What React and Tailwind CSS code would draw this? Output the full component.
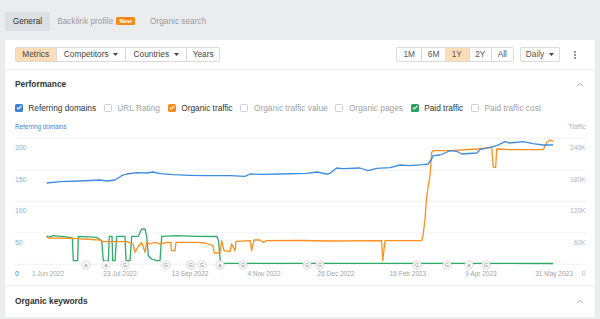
import React from "react";

const BLUE =
  "46.7,184 60,182.7 80,182 100,181 106.7,182 115,181 121.7,176.7 126.7,175 136.7,173.7 146.7,174 153,173 160,174.7 173,175.7 190,176.3 206.7,176.7 230,176.7 245,177.3 250,175 263,175.3 280,175 306.7,174.3 316.7,173 326.7,175 330,174.3 336.7,169 343,169.7 360,169 368,171.7 376.7,169.3 390,168.7 400,166 410,166.7 423,165.7 428,165 431.7,160 433,156.7 440,156 445,154 450,151.7 456.7,152.3 461.7,155 476.7,154 480,150.7 490,148.3 496.7,146.7 505,142.7 510,144 523,142.7 533,144.7 543,146 553,146";
const ORANGE =
  "46.7,238.3 50,239 73,239.3 100,241 103,242.7 126.7,242.7 133,245 135,253.3 138,248 141.7,243.3 145,253.3 146.7,243.3 150,245 155,243.3 160,245 166.7,243.3 170.7,243.3 171.5,251.7 175,251.7 176,243.3 196.7,243.3 205,244 213,246.7 214.3,254 220,254 221.7,241.7 224,251.7 230,252.7 231.7,245 235,251.7 236,242.3 250,241.7 251.7,251.7 254,241 260,241 263,243.3 266.7,241.7 300,241.5 330,242 381.7,241.7 382.7,261.7 385,241.7 421.7,241.7 423,237 425,220 426.7,198 428.5,185 430,176.7 431.7,153.3 433.3,151.7 450,151.7 476.7,150 491.7,148.3 493.3,168.3 495.7,168.3 496.7,150 510,150.7 543.3,150.7 546.7,143.3 550,141 553.3,142.3";
const GREEN =
  "46.7,236.7 48.3,238.3 53.3,236.7 70,238.3 72.3,239 73.3,261.7 77.7,261.7 78.3,237.3 96.7,238.3 101.7,241.7 103.3,261.7 108.3,261.7 109.3,237.3 112,237.3 112.7,261.7 115,261.7 116.7,237.3 125,237.3 126,261.7 130,261.7 131.7,237.3 138.3,237.3 141.7,230 145,230 146.7,237.3 148.3,256.7 151.7,260 156.7,261.7 160,261.7 161.7,237.3 176.7,236.7 196.7,237.3 217,237.5 218.5,241.7 220.5,264.3 553,264.5";

const MARKS = [
  [86, "a"], [106, "a"], [125, "G"], [166, "G"], [191, "G"], [202, "G"], [220, "a"],
  [243, "G"], [307, "G"], [320, "G"], [417, "G"], [447, "G"], [469, "a"], [486, "G"],
];
const DATES = [
  [48, "1 Jun 2022"], [120, "23 Jul 2022"], [190, "13 Sep 2022"], [264, "4 Nov 2022"],
  [336, "26 Dec 2022"], [408, "16 Feb 2023"], [481, "9 Apr 2023"], [554, "31 May 2023"],
];
const GRID = [139.3, 171, 202.3, 233.8, 265.3];
const LEFT = ["200", "150", "100", "50", "0"];
const RIGHT = ["240K", "180K", "120K", "60K", "0"];

function Caret() {
  return (
    <svg width="5" height="3" viewBox="0 0 5 3" className="ml-[4.5px]">
      <path d="M0 0 L5 0 L2.5 3 Z" fill="#444" />
    </svg>
  );
}

function Chevron() {
  return (
    <svg width="8" height="5" viewBox="0 0 8 5">
      <polyline points="1,4.2 4,1.2 7,4.2" fill="none" stroke="#aaa" strokeWidth="1" />
    </svg>
  );
}

function Cb({ cls, checked }) {
  if (!checked)
    return <span className="w-[8px] h-[8px] rounded-[1.5px] border border-[#cfcfcf] bg-white shrink-0" />;
  return (
    <span className={"w-[8px] h-[8px] rounded-[1.5px] shrink-0 flex items-center justify-center " + cls}>
      <svg width="6" height="5" viewBox="0 0 6 5">
        <polyline points="0.8,2.6 2.3,4 5.2,1" fill="none" stroke="#fff" strokeWidth="1.1" />
      </svg>
    </span>
  );
}

function Item({ cls, checked, label }) {
  return (
    <div className="flex items-center gap-[5.6px]">
      <Cb cls={cls} checked={checked} />
      <span className={checked ? "text-[#333]" : "text-[#a2a2a2]"}>{label}</span>
    </div>
  );
}

export default function App() {
  return (
    <div
      className="w-[600px] h-[319px] overflow-hidden bg-[#ebecee] text-[8.3px] leading-none"
      style={{ fontFamily: '"Liberation Sans", Arial, sans-serif' }}
    >
      {/* tabs */}
      <div className="flex items-center h-[19px] mt-[12px] ml-[5px]">
        <div className="h-full px-[7.7px] flex items-center bg-[#dcdfe3] rounded-[2px] text-[#333]">General</div>
        <div className="ml-[7.3px] flex items-center text-[#9b9b9b]">
          Backlink profile
          <span className="ml-[3.3px] w-[18.7px] h-[8px] rounded-[1.5px] bg-[#fb8a12] text-white text-[6px] font-bold flex items-center justify-center">
            New
          </span>
        </div>
        <div className="ml-[15px] text-[#9b9b9b]">Organic search</div>
      </div>

      {/* panel */}
      <div className="mt-[9px] mx-[5px] bg-white">
        {/* toolbar */}
        <div className="h-[30px] flex items-center pl-[9.7px] pr-[19px] border-b border-[#f0f0f0]">
          <div className="flex h-[15.5px] border border-[#dadada] rounded-[2px] text-[#444]">
            <div className="w-[40px] flex items-center justify-center bg-[#fddcb8]">Metrics</div>
            <div className="w-[69.6px] flex items-center justify-center border-l border-[#dadada]">
              Competitors
              <Caret />
            </div>
            <div className="w-[60.7px] flex items-center justify-center border-l border-[#dadada]">
              Countries
              <Caret />
            </div>
            <div className="w-[33.3px] flex items-center justify-center border-l border-[#dadada]">Years</div>
          </div>
          <div className="ml-auto flex h-[15.5px] border border-[#dadada] rounded-[2px] text-[#555]">
            <div className="w-[23.7px] flex items-center justify-center">1M</div>
            <div className="w-[24px] flex items-center justify-center border-l border-[#dadada]">6M</div>
            <div className="w-[23.6px] flex items-center justify-center bg-[#fddcb8]">1Y</div>
            <div className="w-[22.4px] flex items-center justify-center border-l border-[#dadada]">2Y</div>
            <div className="w-[21.6px] flex items-center justify-center border-l border-[#dadada]">All</div>
          </div>
          <div className="ml-[6px] w-[40.4px] h-[15.5px] border border-[#dadada] rounded-[2px] flex items-center justify-center text-[#555]">
            Daily
            <Caret />
          </div>
          <div className="ml-[14px] flex flex-col gap-[1px]">
            <span className="w-[2px] h-[2px] rounded-full bg-[#777]" />
            <span className="w-[2px] h-[2px] rounded-full bg-[#777]" />
            <span className="w-[2px] h-[2px] rounded-full bg-[#777]" />
          </div>
        </div>

        {/* performance header */}
        <div className="h-[28px] flex items-center justify-between pl-[10px] pr-[11px]">
          <span className="text-[8.4px] font-bold text-[#333]">Performance</span>
          <Chevron />
        </div>

        {/* legend */}
        <div className="h-[20px] flex items-center gap-[7.7px] pl-[9.7px] text-[8.3px]">
          <Item cls="bg-[#3a84d6]" checked label="Referring domains" />
          <Item label="URL Rating" />
          <Item cls="bg-[#f98b1e]" checked label="Organic traffic" />
          <Item label="Organic traffic value" />
          <Item label="Organic pages" />
          <Item cls="bg-[#23a35e]" checked label="Paid traffic" />
          <Item label="Paid traffic cost" />
        </div>

        {/* axis titles */}
        <div className="h-[18px] flex items-center justify-between pl-[10px] pr-[9.3px] text-[6.3px]">
          <span className="text-[#3d86d6]">Referring domains</span>
          <span className="text-[#b0b0b0]">Traffic</span>
        </div>

        {/* chart */}
        <svg width="590" height="149" viewBox="5 137 590 149" className="block">
          {GRID.map((y) => (
            <line key={y} x1="15" x2="586" y1={y} y2={y} stroke="#f0f0f0" strokeWidth="0.8" />
          ))}
          {LEFT.map((t, i) => (
            <text
              key={t}
              x="15"
              y={GRID[i] + 12}
              fontSize="6.8"
              fill={t === "0" ? "#3a7fd4" : "#7fb0e6"}
              fontFamily="Liberation Sans, Arial, sans-serif"
            >
              {t}
            </text>
          ))}
          {RIGHT.map((t, i) => (
            <text
              key={t}
              x="585.5"
              y={GRID[i] + 12}
              fontSize="6.6"
              textAnchor="end"
              fill="#b3b3b3"
              fontFamily="Liberation Sans, Arial, sans-serif"
            >
              {t}
            </text>
          ))}
          {DATES.map(([x, t]) => (
            <text
              key={t}
              x={x}
              y="277"
              fontSize="6.5"
              textAnchor="middle"
              fill="#a3a3a3"
              fontFamily="Liberation Sans, Arial, sans-serif"
            >
              {t}
            </text>
          ))}
          <polyline points={GREEN} fill="none" stroke="#2faa64" strokeWidth="1.3" strokeLinejoin="round" />
          <polyline points={ORANGE} fill="none" stroke="#fb8f1f" strokeWidth="1.3" strokeLinejoin="round" />
          <polyline points={BLUE} fill="none" stroke="#3d8ce0" strokeWidth="1.3" strokeLinejoin="round" />
          {MARKS.map(([x, l], i) => (
            <g key={i}>
              <circle cx={x} cy="266" r="4.2" fill="#f7f7f7" stroke="#cdcdcd" strokeWidth="0.7" />
              <text
                x={x}
                y="267.9"
                fontSize="5"
                textAnchor="middle"
                fill="#8a8a8a"
                fontFamily="Liberation Sans, Arial, sans-serif"
              >
                {l}
              </text>
            </g>
          ))}
        </svg>

        {/* organic keywords */}
        <div className="h-[32px] flex items-center justify-between pl-[10px] pr-[11px] border-t border-[#f0f0f0]">
          <span className="text-[8.4px] font-bold text-[#333]">Organic keywords</span>
          <Chevron />
        </div>
      </div>
    </div>
  );
}
